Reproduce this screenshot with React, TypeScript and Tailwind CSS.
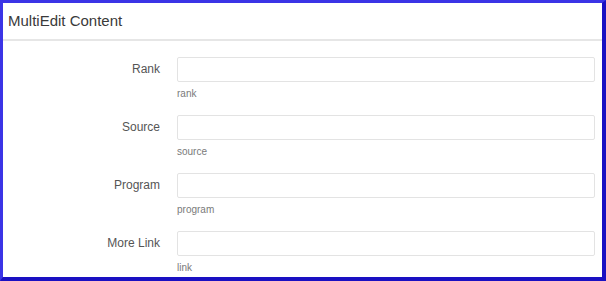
import React from "react";

const fields = [
  { label: "Rank", help: "rank" },
  { label: "Source", help: "source" },
  { label: "Program", help: "program" },
  { label: "More Link", help: "link" },
];

export default function App() {
  return (
    <div
      className="w-[606px] h-[281px] overflow-hidden bg-white border-l-[3px] border-t-[3px] border-r-[4px] border-b-[4px] border-l-[#3b34e6] border-t-[#3b34e6] border-r-[#1a10c2] border-b-[#1a10c2]"
      style={{ fontFamily: '"Liberation Sans", Arial, sans-serif' }}
    >
      {/* Header */}
      <div className="h-[38px] border-b-2 border-[#e6e6e6] px-[5px] pt-[8px]">
        <h2 className="text-[15px] text-[#3a3a3a] leading-[20px]">MultiEdit Content</h2>
      </div>

      {/* Form */}
      <div className="pt-[16px] flex flex-col gap-[15px]">
        {fields.map((f) => (
          <div key={f.label} className="flex">
            <label className="w-[157px] shrink-0 text-right text-[12px] text-[#555] leading-[25px]">
              {f.label}
            </label>
            <div className="ml-[17px] w-[418px]">
              <input className="block w-full h-[25px] border border-[#e3e3e3] rounded-[2px] bg-white outline-none" />
              <div className="mt-[6px] text-[10px] text-[#7a7a7a] leading-[12px]">{f.help}</div>
            </div>
          </div>
        ))}
      </div>
    </div>
  );
}
